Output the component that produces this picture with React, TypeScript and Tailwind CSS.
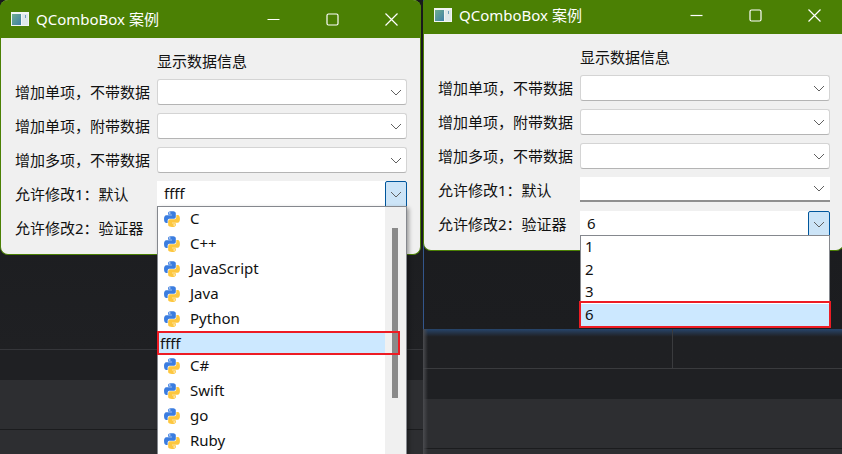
import type { ReactNode } from 'react';

const languages = ['C', 'C++', 'JavaScript', 'Java', 'Python', 'ffff', 'C#', 'Swift', 'go', 'Ruby'];
const numbers = ['1', '2', '3', '6'];

function PythonIcon() {
  return (
    <svg width="16" height="16" viewBox="0 0 111 111" className="shrink-0">
      <path fill="#3b7de0" d="M54.9.9C26.9.9 28.7 13 28.7 13v12.6h26.7v3.8H18.1S.2 27.4.2 55.6s15.6 27.2 15.6 27.2h9.3V69.7s-.5-15.6 15.4-15.6h26.5s14.9.2 14.9-14.4V15.6S84.5.9 54.9.9zM40.2 9.4a4.8 4.8 0 1 1 0 9.6 4.8 4.8 0 0 1 0-9.6z" />
      <path fill="#fdc73f" d="M55.7 110.3c28 0 26.3-12.1 26.3-12.1V85.6H55.3v-3.8h37.3s17.9 2 17.9-26.2-15.6-27.2-15.6-27.2h-9.3v13.1s.5 15.6-15.4 15.6H43.7s-14.9-.2-14.9 14.4v24.1s-2.3 14.7 26.9 14.7zm14.7-8.5a4.8 4.8 0 1 1 0-9.6 4.8 4.8 0 0 1 0 9.6z" />
    </svg>
  );
}

function Chevron() {
  return (
    <svg width="12" height="7" viewBox="0 0 12 7" className="shrink-0">
      <path d="M1 1l5 5 5-5" fill="none" stroke="#606060" strokeWidth="1" />
    </svg>
  );
}

function AppIcon() {
  return (
    <svg width="18" height="14" viewBox="0 0 18 14" className="shrink-0">
      <defs>
        <linearGradient id="pane" x1="0" y1="0" x2="1" y2="1">
          <stop offset="0" stopColor="#6fae8e" />
          <stop offset="1" stopColor="#3f7fa8" />
        </linearGradient>
      </defs>
      <rect width="18" height="14" fill="#f2f5f4" />
      <rect x="1" y="2" width="9" height="11" fill="url(#pane)" />
      <rect x="11" y="2" width="6" height="11" fill="#dfe8ea" />
      <rect x="14" y="3" width="1" height="3" fill="#6fa0bc" />
    </svg>
  );
}

function TitleBar() {
  return (
    <div className="flex h-[38px] items-center bg-[#4b8004] pl-[11px] text-white">
      <AppIcon />
      <span className="ml-[7px] text-[15px]">QComboBox 案例</span>
      <div className="ml-auto mr-[23px] flex items-center gap-[46px]">
        <svg width="13" height="13" viewBox="0 0 13 13">
          <path d="M0.5 6.5h12" stroke="#fff" strokeWidth="1.2" />
        </svg>
        <svg width="13" height="13" viewBox="0 0 13 13">
          <rect x="1" y="1" width="11" height="11" rx="1.5" fill="none" stroke="#fff" strokeWidth="1.2" />
        </svg>
        <svg width="13" height="13" viewBox="0 0 13 13">
          <path d="M0.5 0.5l12 12M12.5 0.5l-12 12" stroke="#fff" strokeWidth="1.2" />
        </svg>
      </div>
    </div>
  );
}

function Combo() {
  return (
    <div className="flex h-[26px] w-[250px] items-center justify-end rounded-[3px] border border-[#d4d4d4] border-b-[#b4b4b4] bg-white pr-[4px]">
      <Chevron />
    </div>
  );
}

// 没有焦点的可编辑下拉框
function FlatCombo() {
  return (
    <div className="flex h-[25px] w-[250px] items-center justify-end self-start border-b-2 border-[#8f8f8f] bg-white pr-[5px]">
      <Chevron />
    </div>
  );
}

function OpenCombo({ value, children }: { value: string; children: ReactNode }) {
  return (
    <div className="relative flex h-[26px] w-[250px] bg-white">
      <span className="flex-1 pl-[7px] leading-[24px]">{value}</span>
      <div className="flex w-[22px] items-center justify-center rounded-t-[2px] border border-[#00569c] bg-[#cce4f7]">
        <Chevron />
      </div>
      {children}
    </div>
  );
}

function LanguagePopup() {
  return (
    <div className="absolute left-0 top-[25px] z-10 flex h-[260px] w-[250px] border border-[#85888e] bg-white shadow-[2px_2px_4px_rgba(0,0,0,0.35)]">
      <div className="flex-1">
        {languages.map((name) =>
          name === 'ffff' ? (
            <div key={name} className="relative flex h-[22px] items-center bg-[#cce8ff] pl-[2px]">
              {name}
              <div className="absolute -left-px top-[-1px] z-10 h-[24px] w-[243px] border-2 border-[#ed1c24]" />
            </div>
          ) : (
            <div key={name} className="flex h-[25px] items-center pb-[2px] pl-[6px]">
              <PythonIcon />
              <span className="ml-[10px]">{name}</span>
            </div>
          ),
        )}
      </div>
      <div className="w-[21px] bg-[#f0f0f0] pl-[7px] pt-[21px]">
        <div className="h-[170px] w-[6px] bg-[#8a8a8a]" />
      </div>
    </div>
  );
}

function NumberPopup() {
  return (
    <div className="absolute left-0 top-[24px] z-10 h-[93px] w-[250px] border border-[#85888e] bg-white">
      {numbers.map((n) =>
        n === '6' ? (
          <div key={n} className="relative flex h-[22px] items-center bg-[#cce8ff] pl-[4px]">
            {n}
            <div className="absolute -left-[2px] -right-[2px] top-[-3px] h-[27px] border-2 border-[#ed1c24]" />
          </div>
        ) : (
          <div key={n} className="flex h-[22.5px] items-center pb-[2px] pl-[4px]">
            {n}
          </div>
        ),
      )}
    </div>
  );
}

function Row({ label, children }: { label: string; children: ReactNode }) {
  return (
    <div className="flex h-[26px] items-center">
      <span className="w-[142px] whitespace-nowrap">{label}</span>
      {children}
    </div>
  );
}

function Window({ className, fourth, fifth }: { className: string; fourth: ReactNode; fifth: ReactNode }) {
  return (
    <div className={`absolute h-[255px] w-[421px] rounded-[8px] border-x border-b border-[#4b8004] bg-[#f0f0f0] text-[15px] text-[#111] ${className}`}>
      <div className="-mx-px overflow-hidden rounded-t-[8px]">
        <TitleBar />
      </div>
      <div className="flex flex-col gap-[8px] pl-[14px] pt-[10px]">
        <div className="-mb-[3px] h-[26px] pl-[142px] leading-[26px]">显示数据信息</div>
        <Row label="增加单项，不带数据"><Combo /></Row>
        <Row label="增加单项，附带数据"><Combo /></Row>
        <Row label="增加多项，不带数据"><Combo /></Row>
        <Row label="允许修改1：默认">{fourth}</Row>
        <Row label="允许修改2：验证器">{fifth}</Row>
      </div>
    </div>
  );
}

export default function App() {
  return (
    <div className="relative flex h-[454px] w-[842px] overflow-hidden bg-[#1d1e21] font-['Noto_Sans','Noto_Sans_CJK_SC',sans-serif]">
      {/* 背后的编辑器窗口 */}
      <div className="flex w-[423px] flex-col">
        <div className="h-[349px] bg-gradient-to-b from-[#18191b] to-[#1f2023]" />
        <div className="h-[31px] border-t border-[#35363a] bg-[#1f2023]" />
        <div className="h-[50px] border-b border-[#1b1c1e] bg-[#2d2e31]" />
        <div className="flex-1 bg-[#2d2e31]" />
      </div>
      <div className="flex flex-1 flex-col">
        <div className="h-[329px] border-l border-[#33568c] bg-gradient-to-b from-[#18191b] to-[#1c1d20]" />
        <div className="relative flex flex-1 flex-col">
          <div className="flex h-[40px] border-b border-[#3a3b3e] bg-gradient-to-b from-[#26456c] from-0% via-[#1f2023] via-20% to-[#1f2023]">
            <div className="w-[250px] border-r border-[#3a3b3e]" />
          </div>
          <div className="h-[30px] bg-[#1f2023]" />
          <div className="h-[50px] border-b border-[#1b1c1e] bg-[#2d2e31]" />
          <div className="flex-1 bg-[#2d2e31]" />
          <div className="absolute inset-y-0 left-0 w-[5px] bg-gradient-to-r from-[#4a4b4f] to-transparent" />
        </div>
      </div>

      <Window
        className="left-0 top-0"
        fourth={
          <OpenCombo value="ffff">
            <LanguagePopup />
          </OpenCombo>
        }
        fifth={<Combo />}
      />
      <Window
        className="left-[423px] top-[-4px]"
        fourth={<FlatCombo />}
        fifth={
          <OpenCombo value="6">
            <NumberPopup />
          </OpenCombo>
        }
      />
    </div>
  );
}
